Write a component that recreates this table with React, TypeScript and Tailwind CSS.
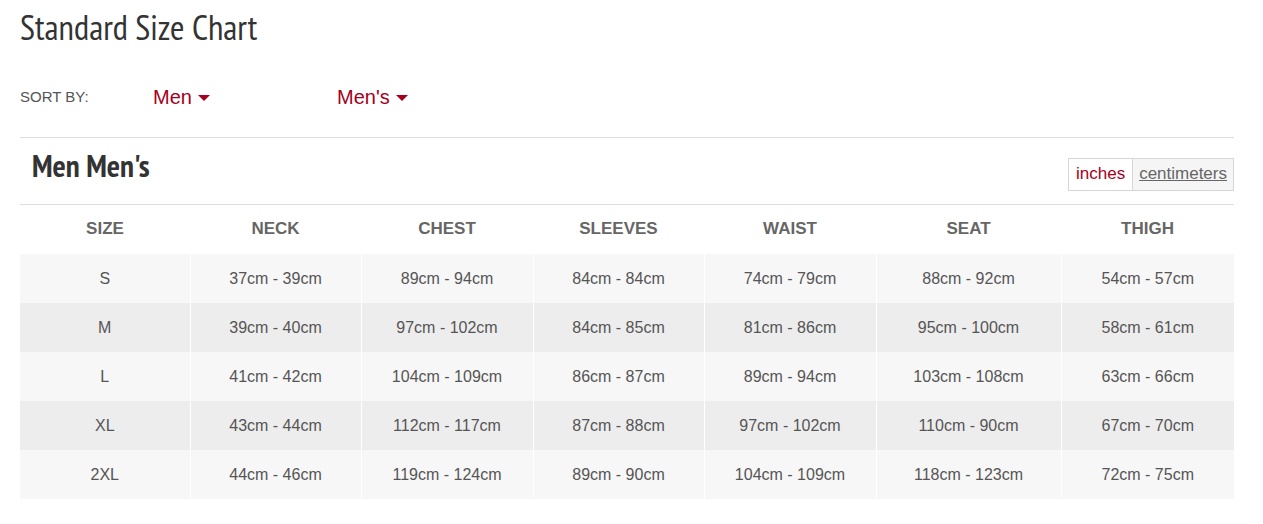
import React from 'react';

const HEADERS = ['SIZE', 'NECK', 'CHEST', 'SLEEVES', 'WAIST', 'SEAT', 'THIGH'];

const ROWS: string[][] = [
  ['S', '37cm - 39cm', '89cm - 94cm', '84cm - 84cm', '74cm - 79cm', '88cm - 92cm', '54cm - 57cm'],
  ['M', '39cm - 40cm', '97cm - 102cm', '84cm - 85cm', '81cm - 86cm', '95cm - 100cm', '58cm - 61cm'],
  ['L', '41cm - 42cm', '104cm - 109cm', '86cm - 87cm', '89cm - 94cm', '103cm - 108cm', '63cm - 66cm'],
  ['XL', '43cm - 44cm', '112cm - 117cm', '87cm - 88cm', '97cm - 102cm', '110cm - 90cm', '67cm - 70cm'],
  ['2XL', '44cm - 46cm', '119cm - 124cm', '89cm - 90cm', '104cm - 109cm', '118cm - 123cm', '72cm - 75cm'],
];

// column widths measured from the design
const COL_WIDTHS = ['w-[170px]', 'w-[171px]', 'w-[172px]', 'w-[171px]', 'w-[172px]', 'w-[185px]', 'w-[173px]'];

const Caret = () => (
  <svg width="12" height="6" viewBox="0 0 12 6" className="ml-[6px] mt-[2px]">
    <path d="M0 0 L12 0 L6 6 Z" fill="#a6001c" />
  </svg>
);

const App: React.FC = () => {
  return (
    <div className="bg-white min-h-[524px] px-5 font-['Liberation_Sans',Arial,sans-serif]">
      <div className="w-[1214px]">
        {/* Title */}
        <h1 className="pt-[8px] text-[35px] leading-[38px] font-light text-[#333] font-['PT_Sans_Narrow','Liberation_Sans_Narrow',sans-serif]">
          Standard Size Chart
        </h1>

        {/* Sort by */}
        <div className="flex items-center h-[40px] mt-[31px] mb-[20px]">
          <span className="w-[133px] text-[15px] text-[#555] uppercase">Sort by:</span>
          <button className="w-[184px] flex items-center text-[20px] text-[#a6001c]">
            Men
            <Caret />
          </button>
          <button className="flex items-center text-[20px] text-[#a6001c]">
            Men's
            <Caret />
          </button>
        </div>

        <div className="border-t border-[#ddd]" />

        {/* Section header */}
        <div className="flex items-center justify-between h-[66px] pl-3">
          <h2 className="text-[31px] font-bold text-[#333] font-['PT_Sans_Narrow','Liberation_Sans_Narrow',sans-serif] mt-[-10px]">
            Men Men's
          </h2>
          <div className="flex border border-[#d6d6d6] text-[17px] mt-[6px]">
            <button className="px-[7px] h-[31px] bg-white text-[#a6001c] border-r border-[#d6d6d6]">inches</button>
            <button className="px-[6px] h-[31px] bg-[#f5f5f5] text-[#666] underline">centimeters</button>
          </div>
        </div>

        {/* Table */}
        <table className="border-collapse border-t border-[#ddd] w-[1214px] table-fixed">
          <thead>
            <tr className="h-[49px]">
              {HEADERS.map((h, i) => (
                <th key={h} className={`${COL_WIDTHS[i]} text-center text-[17px] font-bold text-[#666] pb-[1px]`}>
                  {h}
                </th>
              ))}
            </tr>
          </thead>
          <tbody>
            {ROWS.map((row, r) => (
              <tr key={row[0]} className={`h-[49px] ${r % 2 === 0 ? 'bg-[#f7f7f7]' : 'bg-[#ededed]'}`}>
                {row.map((cell, c) => (
                  <td
                    key={c}
                    className={`text-center text-[16px] text-[#555] pt-[1px] ${c < row.length - 1 ? 'border-r border-white' : ''}`}
                  >
                    {cell}
                  </td>
                ))}
              </tr>
            ))}
          </tbody>
        </table>
      </div>
    </div>
  );
};

export default App;
